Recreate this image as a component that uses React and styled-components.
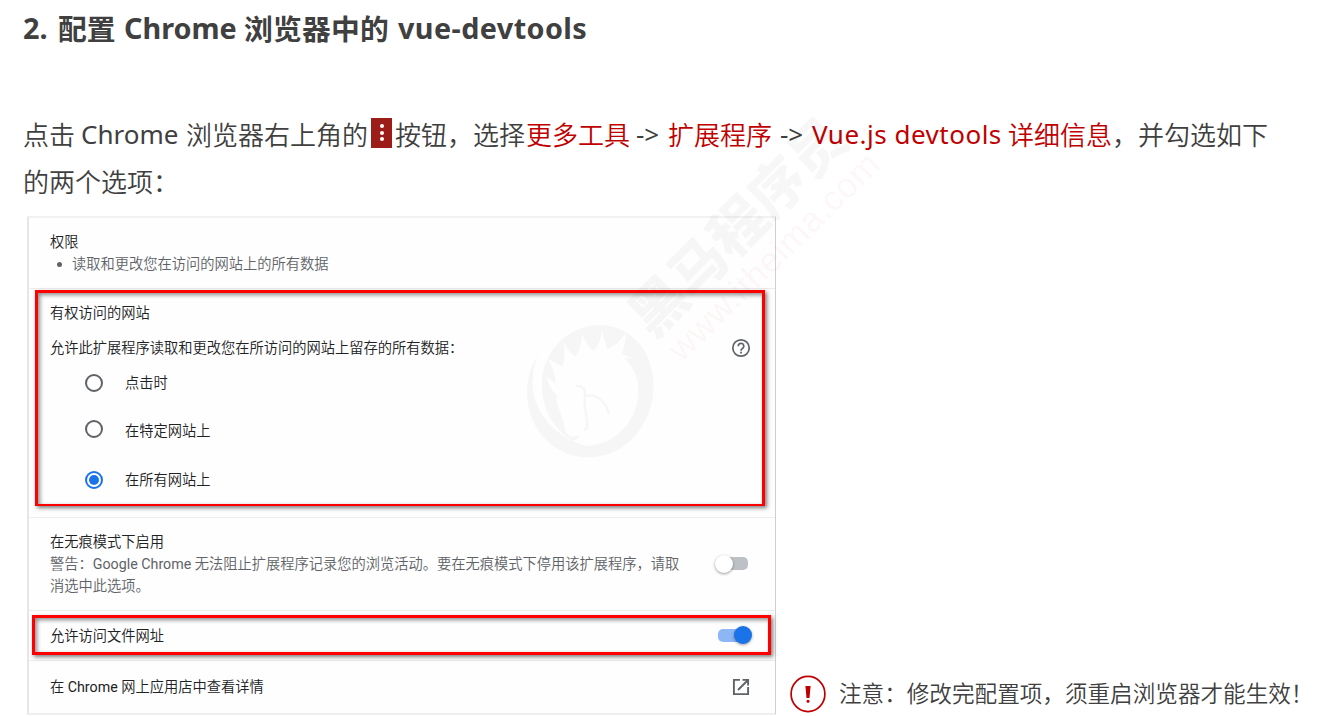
import React from "react";
import styled, { createGlobalStyle } from "styled-components";

const GlobalStyle = createGlobalStyle`
  * { box-sizing: border-box; }
  body { margin: 0; background: #fff; overflow: hidden; }
`;

const Page = styled.main`
  position: relative;
  width: 1319px;
  height: 716px;
  overflow: hidden;
  padding: 5px 0 0 23px;
  color: #404040;
  font-family: "Open Sans", "Noto Sans CJK SC", sans-serif;
`;

const Line = styled.div`
  display: flex;
  align-items: center;
  height: 47px;
  white-space: pre;
  font-size: 26px;
  font-weight: 350;
  line-height: 47px;
`;

const Title = styled(Line).attrs({ as: "h1" })`
  margin: 0 0 59px;
  height: 46px;
  font-size: 28.8px;
  font-weight: 700;
  line-height: 46px;
`;

const Run = styled.span`
  flex: none;
  width: ${(p) => p.$w}px;
  color: ${(p) => (p.$red ? "#c00000" : "inherit")};
  letter-spacing: ${(p) => p.$ls || 0}px;
`;

const Cjk = styled(Run)`
  font-family: "Noto Sans CJK SC", sans-serif;
`;

const Latin = styled(Run)`
  padding-top: ${(p) => (p.$bold ? 0 : 2)}px;
  font-family: "Noto Sans", "Open Sans", sans-serif;
  font-weight: ${(p) => (p.$bold ? 700 : 400)};
`;

const MenuChip = styled.span`
  display: flex;
  flex-direction: column;
  align-items: center;
  justify-content: center;
  gap: 2.5px;
  width: 21px;
  height: 30px;
  margin: 0 3px 2px 2px;
  background: #9c1d17;
`;

const Dot = styled.i`
  width: 4px;
  height: 4px;
  border-radius: 50%;
  background: #fff;
`;

const Lower = styled.div`
  display: flex;
  margin: 12px 0 0 4px;
`;

const Panel = styled.section`
  width: 749px;
  height: 499px;
  border: solid;
  border-width: 2px 1px 2px 2px;
  border-color: #f2f2f2 #cfcfcf #efefef #e6e6e6;
  background: #fefefe;
  color: #202124;
  font: 350 14.25px/22px Roboto, "Noto Sans CJK SC", sans-serif;
`;

const Row = styled.div`
  position: relative;
  display: flex;
  align-items: ${(p) => p.$align || "center"};
  justify-content: space-between;
  height: ${(p) => p.$h}px;
  padding: ${(p) => p.$pad || "0 25px 0 21px"};
  border-bottom: ${(p) => (p.$last ? 0 : 1)}px solid #ededed;
`;

const Stack = styled.div`
  display: flex;
  flex-direction: column;
  white-space: nowrap;
`;

const Muted = styled.div`
  color: #5f6368;
`;

const Roman = styled.span`
  font-weight: 400;
`;

const Bullet = styled(Muted)`
  display: flex;
  align-items: center;
  gap: 10px;
  padding-left: 7px;
  &::before {
    content: "";
    width: 5px;
    height: 5px;
    border-radius: 50%;
    background: #5f6368;
  }
`;

const Prompt = styled.div`
  display: flex;
  align-items: center;
  justify-content: space-between;
  width: 701px;
  height: 22px;
  margin: 13px 0;
`;

const Option = styled.label`
  display: flex;
  align-items: center;
  gap: 22px;
  height: 22px;
  margin: 0 0 ${(p) => p.$after}px 35px;
`;

const Radio = styled.span`
  display: grid;
  place-items: center;
  width: 18px;
  height: 18px;
  margin-top: ${(p) => p.$nudge || 0}px;
  border: 2px solid ${(p) => (p.$on ? "#1a73e8" : "#5f6368")};
  border-radius: 50%;
  &::after {
    content: "";
    width: 10px;
    height: 10px;
    border-radius: 50%;
    background: ${(p) => (p.$on ? "#1a73e8" : "transparent")};
  }
`;

const Switch = styled.span`
  display: flex;
  align-items: center;
  justify-content: ${(p) => (p.$on ? "flex-end" : "flex-start")};
  width: 31px;
  height: 13px;
  margin: 0 ${(p) => p.$mr}px 1px 0;
  border-radius: 5px;
  background: ${(p) => (p.$on ? "#8cb7f4" : "#bdc1c6")};
`;

const Knob = styled.span`
  flex: none;
  width: 18px;
  height: 18px;
  margin: 0 -3px 0 -2px;
  border-radius: 50%;
  background: ${(p) => (p.$on ? "#1a73e8" : "#fff")};
  box-shadow: 0 1px 3px rgba(0, 0, 0, 0.4);
`;

const Highlight = styled.div`
  position: absolute;
  inset: ${(p) => p.$inset};
  border: solid #f00;
  border-width: ${(p) => p.$bw || "3px"};
  box-shadow: 2px 2px 4px rgba(0, 0, 0, 0.5), inset 2px 2px 4px rgba(0, 0, 0, 0.45);
  pointer-events: none;
`;

const Note = styled.div`
  display: flex;
  align-items: center;
  gap: 13px;
  align-self: flex-end;
  height: 40px;
  margin: 0 0 1px 14px;
  font: 350 22.6px/36px "Noto Sans CJK SC", sans-serif;
  white-space: nowrap;
`;

const NoteText = styled.span`
  padding-bottom: 2px;
`;

const Watermark = styled.svg`
  position: absolute;
  inset: 0;
  pointer-events: none;
`;

const HelpIcon = () => (
  <svg width="20" height="20" viewBox="0 0 20 20" fill="none" stroke="#5f6368">
    <circle cx="10" cy="10" r="8.2" strokeWidth="1.7" />
    <path d="M7.2 8.2a2.8 2.8 0 1 1 4.7 2c-1 .9-1.9 1.3-1.9 2.6" strokeWidth="1.7" />
    <path d="M10 13.7v1.7" strokeWidth="1.8" />
  </svg>
);

const LaunchIcon = () => (
  <svg width="18" height="18" viewBox="0 0 18 18" fill="none" stroke="#5f6368" strokeWidth="1.9">
    <path d="M8 1.9H1.9v14.2h14.2V9M10.5 1.9h5.6v5.6M16 2 6 12" />
  </svg>
);

const AlertIcon = () => (
  <svg width="36" height="38" viewBox="0 0 36 38">
    <ellipse cx="18" cy="19" rx="16.9" ry="17.6" fill="none" stroke="#c00000" strokeWidth="1.7" />
    <path d="M15.4 11h5.2l-1.1 12h-3z" fill="#c00000" />
    <circle cx="18" cy="26.2" r="1.5" fill="#c00000" />
  </svg>
);

export default function App() {
  return (
    <Page>
      <GlobalStyle />
      <Title>
        <Latin $bold $w={35}>2.</Latin>
        <Cjk $w={66}>配置</Cjk>
        <Latin $bold $w={120}>Chrome</Latin>
        <Cjk $w={154} $ls={0.2}>浏览器中的</Cjk>
        <Latin $bold $w={200} $ls={0.4}>vue-devtools</Latin>
      </Title>
      <Line>
        <Cjk $w={58}>点击</Cjk>
        <Latin $w={105}>Chrome</Latin>
        <Cjk $w={183}>浏览器右上角的</Cjk>
        <MenuChip>
          <Dot />
          <Dot />
          <Dot />
        </MenuChip>
        <Cjk $w={131}>按钮，选择</Cjk>
        <Cjk $w={110} $red>更多工具</Cjk>
        <Latin $w={32}>-&gt;</Latin>
        <Cjk $w={112} $red>扩展程序</Cjk>
        <Latin $w={32}>-&gt;</Latin>
        <Latin $w={196} $red $ls={0.5}>Vue.js devtools</Latin>
        <Cjk $w={104} $red>详细信息</Cjk>
        <Cjk $w={160}>，并勾选如下</Cjk>
      </Line>
      <Line>
        <Cjk $w={160}>的两个选项：</Cjk>
      </Line>
      <Lower>
        <Panel>
          <Row $h={71} $pad="1px 0 1px 21px">
            <Stack>
              <div>权限</div>
              <Bullet>读取和更改您在访问的网站上的所有数据</Bullet>
            </Stack>
          </Row>
          <Row $h={229} $align="flex-start" $pad="13px 0 0 21px">
            <Stack>
              <div>有权访问的网站</div>
              <Prompt>
                允许此扩展程序读取和更改您在所访问的网站上留存的所有数据：
                <HelpIcon />
              </Prompt>
              <Option $after={26}>
                <Radio />
                点击时
              </Option>
              <Option $after={27}>
                <Radio $nudge={-4} />
                在特定网站上
              </Option>
              <Option $after={0}>
                <Radio $on />
                在所有网站上
              </Option>
            </Stack>
            <Highlight $inset="1px 10px 11px 6px" $bw="3px 3px 2px 3px" />
          </Row>
          <Row $h={93}>
            <Stack>
              <div>在无痕模式下启用</div>
              <Muted>
                警告：<Roman>Google Chrome</Roman> 无法阻止扩展程序记录您的浏览活动。要在无痕模式下停用该扩展程序，请取
              </Muted>
              <Muted>消选中此选项。</Muted>
            </Stack>
            <Switch $mr={2}>
              <Knob />
            </Switch>
          </Row>
          <Row $h={50}>
            <div>允许访问文件网址</div>
            <Switch $on $mr={1}>
              <Knob $on />
            </Switch>
            <Highlight $inset="4px 4px 5px 3px" />
          </Row>
          <Row $h={52} $last>
            <div>
              在 <Roman>Chrome</Roman> 网上应用店中查看详情
            </div>
            <LaunchIcon />
          </Row>
        </Panel>
        <Note>
          <AlertIcon />
          <NoteText>注意：修改完配置项，须重启浏览器才能生效！</NoteText>
        </Note>
      </Lower>
      <Watermark width="1319" height="716" viewBox="0 0 1319 716">
        <g fill="#000" fillOpacity="0.03">
          <path
            transform="translate(500 280) scale(.3333)"
            fillRule="evenodd"
            d="M120 218C75 275 70 360 100 425C132 492 195 532 265 532C380 532 461 430 461 318C461 210 390 135 300 135C200 135 125 220 125 310C125 400 175 475 255 497C350 497 415 415 415 335C415 290 400 262 372 234L398 235L364 222Q378 190 377 158Q355 195 323 206Q310 175 305 152Q303 190 280 213Q255 190 246 162Q245 210 225 230Q200 210 191 185Q198 235 187 260Q155 245 144 235Q165 275 167 308Q145 300 140 286Q145 322 170 346C166 380 190 402 194 445C200 472 220 474 240 464C235 484 215 485 197 472C140 435 95 375 98 300Q98 255 120 218Z"
          />
        </g>
        <g fill="none" stroke="#000" strokeOpacity="0.03" strokeWidth="2.5">
          <path d="M576 386Q586 385 585 396C583 405 588 418 587 428L584 430M586 396C597 393 606 402 609 414" />
        </g>
        <text
          transform="translate(653 340) rotate(-45)"
          fontFamily="Noto Sans CJK SC, sans-serif"
          fontWeight="900"
          fontSize="56"
          textLength="280"
          fill="#000"
          fillOpacity="0.03"
        >
          黑马程序员
        </text>
        <text
          transform="translate(682 363) rotate(-44.5)"
          fontFamily="Liberation Sans, sans-serif"
          fontSize="35"
          textLength="280"
          fill="#c00000"
          stroke="#c00000"
          strokeOpacity="0.02"
          fillOpacity="0.045"
        >
          www.itheima.com
        </text>
      </Watermark>
    </Page>
  );
}
